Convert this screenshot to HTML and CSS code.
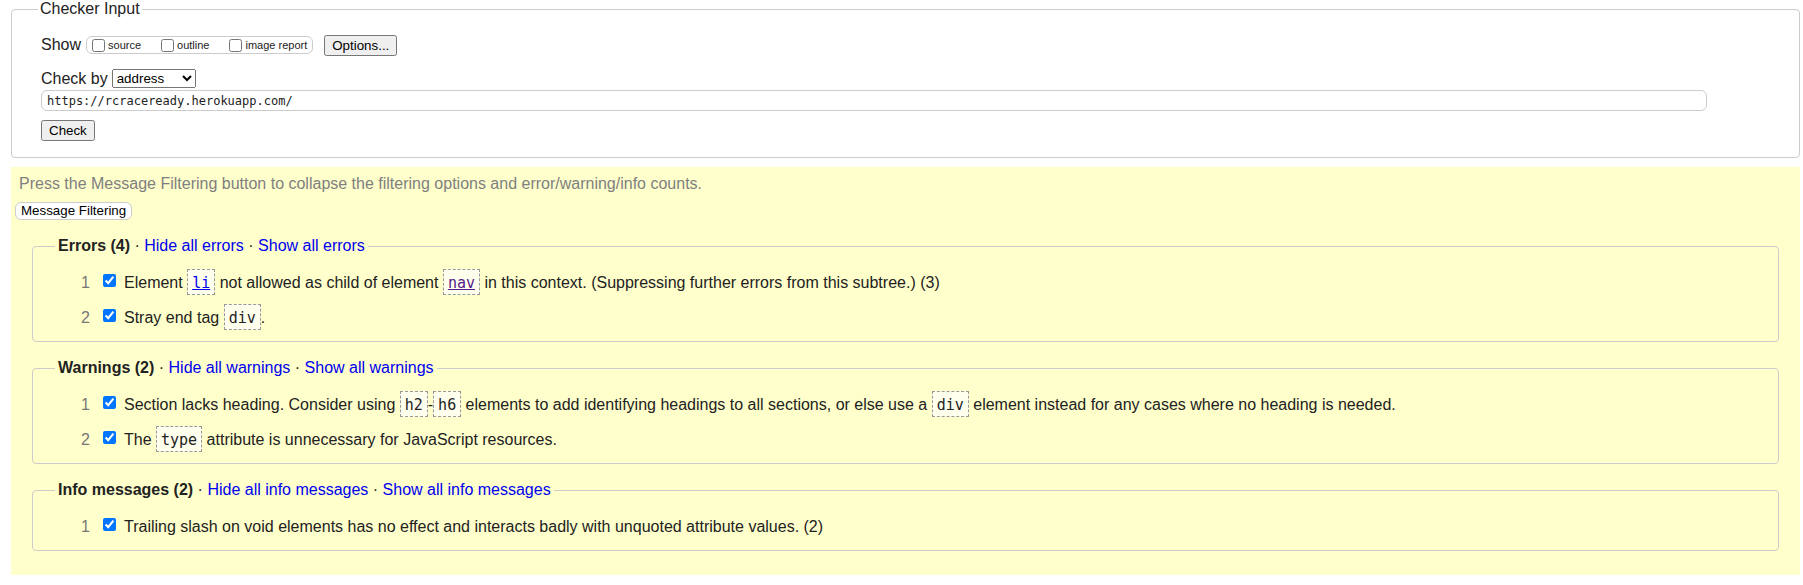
FILE: index.html
```html
<!DOCTYPE html>
<html lang="en">
<head>
<meta charset="utf-8">
<title>Nu Html Checker</title>
<link rel="stylesheet" href="styles.css">
</head>
<body>
<div class="page">
  <fieldset class="input-fs">
    <legend class="input-legend">Checker Input</legend>
    <div class="show-row">
      <span class="lbl">Show</span>
      <span class="opts">
        <label class="opt"><input type="checkbox">source</label>
        <label class="opt"><input type="checkbox">outline</label>
        <label class="opt"><input type="checkbox">image report</label>
      </span>
      <button class="btn opt-btn" type="button">Options...</button>
    </div>
    <div class="by-row">
      <span class="lbl">Check by</span>
      <select class="sel"><option>address</option></select>
    </div>
    <input class="url" type="text" value="https://rcraceready.herokuapp.com/">
    <div class="check-row"><button class="btn" type="button">Check</button></div>
  </fieldset>

  <div class="results">
    <p class="hint">Press the Message Filtering button to collapse the filtering options and error/warning/info counts.</p>
    <div class="mf-row"><button class="mf-btn" type="button">Message Filtering</button></div>

    <fieldset class="group">
      <legend class="group-legend"><b>Errors (4)</b> · <a class="act" href="#">Hide all errors</a> · <a class="act" href="#">Show all errors</a></legend>
      <ol class="msgs">
        <li class="msg"><span class="num">1</span><input type="checkbox" checked><span class="txt">Element <code><a class="clink" href="#">li</a></code> not allowed as child of element <code><a class="clink visited" href="#">nav</a></code> in this context. (Suppressing further errors from this subtree.) (3)</span></li>
        <li class="msg"><span class="num">2</span><input type="checkbox" checked><span class="txt">Stray end tag <code>div</code>.</span></li>
      </ol>
    </fieldset>

    <fieldset class="group">
      <legend class="group-legend"><b>Warnings (2)</b> · <a class="act" href="#">Hide all warnings</a> · <a class="act" href="#">Show all warnings</a></legend>
      <ol class="msgs">
        <li class="msg"><span class="num">1</span><input type="checkbox" checked><span class="txt">Section lacks heading. Consider using <code>h2</code>-<code>h6</code> elements to add identifying headings to all sections, or else use a <code>div</code> element instead for any cases where no heading is needed.</span></li>
        <li class="msg"><span class="num">2</span><input type="checkbox" checked><span class="txt">The <code>type</code> attribute is unnecessary for JavaScript resources.</span></li>
      </ol>
    </fieldset>

    <fieldset class="group">
      <legend class="group-legend"><b>Info messages (2)</b> · <a class="act" href="#">Hide all info messages</a> · <a class="act" href="#">Show all info messages</a></legend>
      <ol class="msgs">
        <li class="msg"><span class="num">1</span><input type="checkbox" checked><span class="txt">Trailing slash on void elements has no effect and interacts badly with unquoted attribute values. (2)</span></li>
      </ol>
    </fieldset>
  </div>
</div>
</body>
</html>
```

FILE: styles.css
```css
html, body {
  margin: 0;
  padding: 0;
  background: #ffffff;
}

body {
  font-family: "Liberation Sans", Arial, sans-serif;
  font-size: 16px;
  line-height: 18px;
  color: #222222;
}

.page {
  margin: 0 3px 0 11px;
}

/* ---------- checker input ---------- */
.input-fs {
  margin: 0;
  padding: 17px 29px 16px;
  border: 1px solid #cccccc;
  border-radius: 4px;
  min-width: 0;
}

.input-legend {
  padding: 0 2px;
  margin-left: -3px;
  line-height: 18px;
}

.show-row {
  display: flex;
  align-items: center;
  height: 20px;
}

.opts {
  display: inline-flex;
  align-items: center;
  box-sizing: border-box;
  height: 18px;
  margin-left: 5px;
  padding: 0 5px 0 1px;
  border: 1px solid #cccccc;
  border-radius: 6px;
  font-size: 11px;
  line-height: 13px;
}

.opt {
  display: inline-flex;
  align-items: center;
  margin-right: 16px;
}

.opt:last-child {
  margin-right: 0;
}

.opt input {
  width: 13px;
  height: 13px;
  margin: 0 3px 0 4px;
}

.btn {
  font-family: "Liberation Sans", Arial, sans-serif;
  font-size: 13.333px;
  color: #000000;
}

.opt-btn {
  margin-left: 11px;
}

.by-row {
  display: flex;
  align-items: center;
  height: 19px;
  margin-top: 14px;
}

.sel {
  box-sizing: border-box;
  width: 84px;
  height: 19px;
  margin: 0 0 0 4px;
  font-family: "Liberation Sans", Arial, sans-serif;
  font-size: 13.333px;
  color: #000000;
}

.url {
  display: block;
  box-sizing: border-box;
  width: 1666px;
  height: 21px;
  margin: 2px 0 0;
  padding: 0 5px;
  border: 1px solid #cccccc;
  border-radius: 6px;
  background: #ffffff;
  font-family: "DejaVu Sans Mono", "Liberation Mono", monospace;
  font-size: 12px;
  color: #222222;
}

.check-row {
  display: flex;
  margin-top: 9px;
}

/* ---------- results ---------- */
.results {
  margin-top: 9px;
  padding: 8px 0 24px;
  background: #ffffcc;
}

.hint {
  margin: 0 0 0 8px;
  color: #808080;
  line-height: 18px;
}

.mf-row {
  display: flex;
  margin: 9px 0 0 4px;
}

.mf-btn {
  box-sizing: border-box;
  height: 18px;
  padding: 0 5px;
  border: 1px solid #cccccc;
  border-radius: 6px;
  background: #ffffff;
  font-family: "Liberation Sans", Arial, sans-serif;
  font-size: 13.333px;
  line-height: 14px;
  color: #000000;
}

.group {
  margin: 17px 21px 0;
  padding: 10px 22px 6px;
  border: 1px solid #cccccc;
  border-radius: 4px;
  min-width: 0;
}

.group-legend {
  padding: 0 3px;
  line-height: 18px;
}

.act {
  color: #0000ee;
  text-decoration: none;
}

.msgs {
  list-style: none;
  margin: 0;
  padding: 0;
}

.msg {
  display: flex;
  align-items: center;
  padding: 8px 0;
  line-height: 19px;
  white-space: nowrap;
}

.num {
  flex: none;
  width: 35px;
  text-align: right;
  color: #777777;
}

.msg input {
  flex: none;
  width: 13px;
  height: 13px;
  margin: 0 8px 4px 13px;
}

.txt {
  white-space: nowrap;
}

code {
  font-family: "DejaVu Sans Mono", "Liberation Mono", monospace;
  font-size: 15px;
  line-height: 1;
  padding: 4px 4px 1.5px;
  border: 1px dashed #999999;
  background: #ffffee;
}

.clink {
  color: #0000ee;
  text-decoration: underline;
}

.clink.visited {
  color: #551a8b;
}
```
